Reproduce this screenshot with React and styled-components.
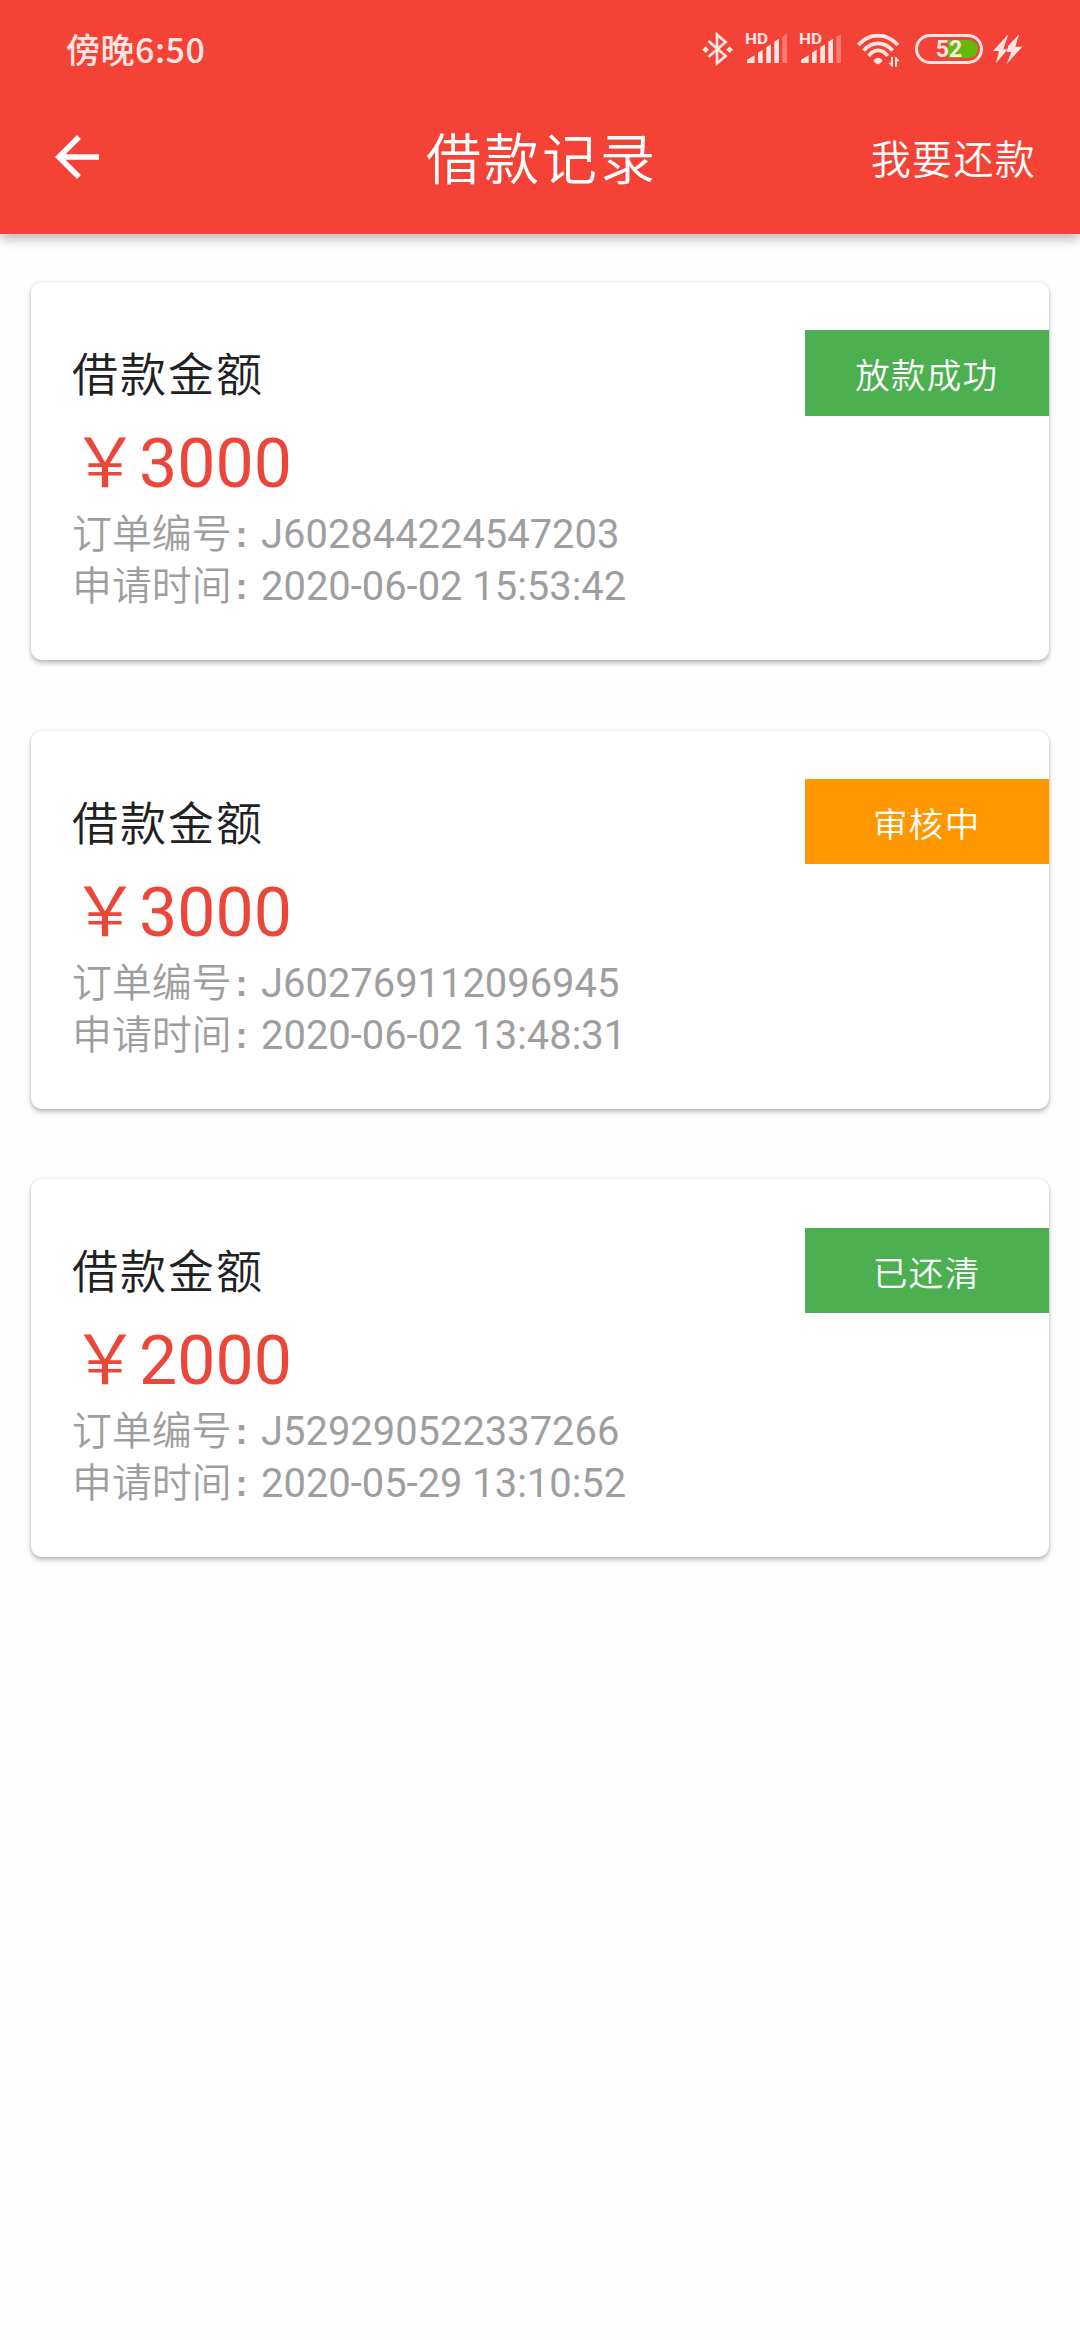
import React from "react";
import styled, { createGlobalStyle } from "styled-components";

const Red = "#f44336";
const AmountRed = "#ea4639";
const Green = "#4caf50";
const Orange = "#ff9800";
const StatusTint = "#ffe6e3";

const records = [
  {
    amount: 3000,
    order: "J602844224547203",
    time: "2020-06-02 15:53:42",
    status: "放款成功",
    colour: Green,
  },
  {
    amount: 3000,
    order: "J602769112096945",
    time: "2020-06-02 13:48:31",
    status: "审核中",
    colour: Orange,
  },
  {
    amount: 2000,
    order: "J529290522337266",
    time: "2020-05-29 13:10:52",
    status: "已还清",
    colour: Green,
  },
];

const GlobalStyle = createGlobalStyle`
  * {
    box-sizing: border-box;
  }
  body {
    margin: 0;
    background: #fefefe;
    font-family: Roboto, "Noto Sans CJK SC", sans-serif;
  }
`;

const Page = styled.div`
  min-height: 2340px;
  overflow: hidden;
`;

const Header = styled.header`
  height: 234px;
  background: ${Red};
  color: #fff;
  box-shadow: 0 5px 11px rgba(0, 0, 0, 0.28);
`;

const StatusBar = styled.div`
  display: flex;
  align-items: center;
  justify-content: space-between;
  height: 98px;
  padding: 0 57px 0 66px;
  color: ${StatusTint};
`;

const Clock = styled.div`
  font: 500 34px/50px "Noto Sans CJK SC", sans-serif;
  letter-spacing: 0.5px;
`;

const StatusIcons = styled.div`
  display: flex;
  align-items: center;
`;

const Icon = styled.svg`
  display: block;
  width: ${(props) => props.$width}px;
  height: 36px;
  margin-right: ${(props) => props.$gap || 0}px;
`;

const Battery = styled.div`
  display: flex;
  align-items: center;
  justify-content: center;
  width: 68px;
  height: 30px;
  margin-right: 9px;
  border: 3px solid ${StatusTint};
  border-radius: 15px;
`;

const BatteryLevel = styled.div`
  display: flex;
  align-items: center;
  justify-content: center;
  width: 57px;
  height: 18px;
  padding-top: 2px;
  border-radius: 9px;
  background: linear-gradient(90deg, transparent 48%, #64b80f 48%);
  font: 700 23px/18px Roboto, sans-serif;
`;

const Toolbar = styled.div`
  display: grid;
  grid-template-columns: 1fr auto 1fr;
  align-items: center;
  height: 118px;
  padding: 0 44px;
  font-family: "Noto Sans CJK SC", sans-serif;
`;

const BackButton = styled.button`
  width: 66px;
  height: 66px;
  padding: 0;
  border: 0;
  background: none;
`;

const Title = styled.h1`
  margin: 0 0 5px;
  padding-left: 4px;
  font-size: 55px;
  font-weight: 350;
  line-height: 80px;
  letter-spacing: 3px;
`;

const RepayLink = styled.a`
  justify-self: end;
  font-size: 40px;
  font-weight: 350;
  line-height: 60px;
  letter-spacing: 1.3px;
`;

const List = styled.main`
  display: flex;
  flex-direction: column;
  gap: 70.8px;
  padding: 47.8px 31px;
`;

const Card = styled.section`
  display: flex;
  align-items: flex-start;
  justify-content: space-between;
  height: 378px;
  padding-left: 41px;
  border-radius: 11px;
  background: #fff;
  box-shadow: 0 3px 5px rgba(0, 0, 0, 0.26), 0 0 3px rgba(0, 0, 0, 0.12);
`;

const CardBody = styled.div`
  padding-top: 57px;
`;

const CardTitle = styled.div`
  color: #212121;
  font: 350 46px/65px "Noto Sans CJK SC", sans-serif;
  letter-spacing: 2px;
`;

const Amount = styled.div`
  margin: 20px 0 5px -1px;
  color: ${AmountRed};
  font-size: 68px;
  line-height: 80px;
`;

const Detail = styled.div`
  display: flex;
  color: #9e9e9e;
  font-size: 39.9px;
  line-height: 52px;
`;

const Label = styled.span`
  font-weight: 350;
`;

const Colon = styled.span`
  width: 29.5px;
  padding-left: 4px;
  font-family: "Liberation Sans", sans-serif;
  font-weight: 700;
  font-size: 36px;
`;

const Badge = styled.div`
  width: 244.5px;
  height: 85.5px;
  margin-top: 48.3px;
  background: ${(props) => props.$colour};
  color: #fff;
  font: 350 34.5px/86px "Noto Sans CJK SC", sans-serif;
  letter-spacing: 1.3px;
  text-align: center;
`;

function BluetoothIcon() {
  return (
    <Icon $width={32} $gap={11} viewBox="36 33 96 108">
      <path
        d="M55 63L107 108L81 130V44L107 66L55 111"
        fill="none"
        stroke={StatusTint}
        strokeWidth="8"
      />
      <path
        d="M47 79l10 10-10 10-10-10zM119 79l10 10-10 10-10-10z"
        fill={StatusTint}
      />
    </Icon>
  );
}

function SignalIcon({ gap }) {
  return (
    <Icon $width={43} $gap={gap} viewBox="165 33 129 108" fill={StatusTint}>
      <text
        x="165"
        y="72"
        fontFamily="Roboto, sans-serif"
        fontWeight="700"
        fontSize="46"
        textLength="69"
        lengthAdjust="spacingAndGlyphs"
      >
        HD
      </text>
      <path d="M171 129v-7q0-3 3-4l20-12v23zM204 129V98l14-9v40zM229 129V82l14-9v56zM253 129V65l14-9v73z" />
      <path d="M277 129V50l14-9v88z" opacity="0.35" />
    </Icon>
  );
}

function WifiIcon() {
  return (
    <Icon $width={45} $gap={14} viewBox="18 33 135 108">
      <g fill="none" stroke={StatusTint} strokeWidth="11">
        <path d="M25 75Q50 47 84 47T144 75" />
        <path d="M41 92Q59 70 84 70T128 92" />
        <path d="M56 108Q67 91 84 91T113 108" />
      </g>
      <path
        d="M72 119q12-11 24 0q3 4-1 7l-7 6q-4 2-8 0l-7-6q-4-3-1-7z"
        fill={StatusTint}
      />
      <path
        d="M123 111h6v29h-4l-9-12h7zM135 140v-29h4l9 13h-7v16z"
        fill={StatusTint}
      />
    </Icon>
  );
}

function BoltIcon() {
  return (
    <Icon $width={31} viewBox="426 33 93 108" fill={StatusTint}>
      <path d="M475 43L429 93H447L438 130L473 88H460zM507 43L475 77L470 96H484L470 132L517 80H496z" />
    </Icon>
  );
}

function RecordCard({ record }) {
  return (
    <Card>
      <CardBody>
        <CardTitle>借款金额</CardTitle>
        <Amount>￥{record.amount}</Amount>
        <Detail>
          <Label>订单编号</Label>
          <Colon>:</Colon>
          {record.order}
        </Detail>
        <Detail>
          <Label>申请时间</Label>
          <Colon>:</Colon>
          {record.time}
        </Detail>
      </CardBody>
      <Badge $colour={record.colour}>{record.status}</Badge>
    </Card>
  );
}

export default function App() {
  return (
    <Page>
      <GlobalStyle />
      <Header>
        <StatusBar>
          <Clock>傍晚6:50</Clock>
          <StatusIcons>
            <BluetoothIcon />
            <SignalIcon gap={11} />
            <SignalIcon gap={14} />
            <WifiIcon />
            <Battery>
              <BatteryLevel>52</BatteryLevel>
            </Battery>
            <BoltIcon />
          </StatusIcons>
        </StatusBar>
        <Toolbar>
          <BackButton aria-label="返回">
            <svg width="66" height="66" viewBox="0 0 24 24" fill="#fff">
              <path d="M20 11H7.83l5.59-5.59L12 4l-8 8 8 8 1.41-1.41L7.83 13H20v-2z" />
            </svg>
          </BackButton>
          <Title>借款记录</Title>
          <RepayLink>我要还款</RepayLink>
        </Toolbar>
      </Header>
      <List>
        {records.map((record) => (
          <RecordCard key={record.order} record={record} />
        ))}
      </List>
    </Page>
  );
}
